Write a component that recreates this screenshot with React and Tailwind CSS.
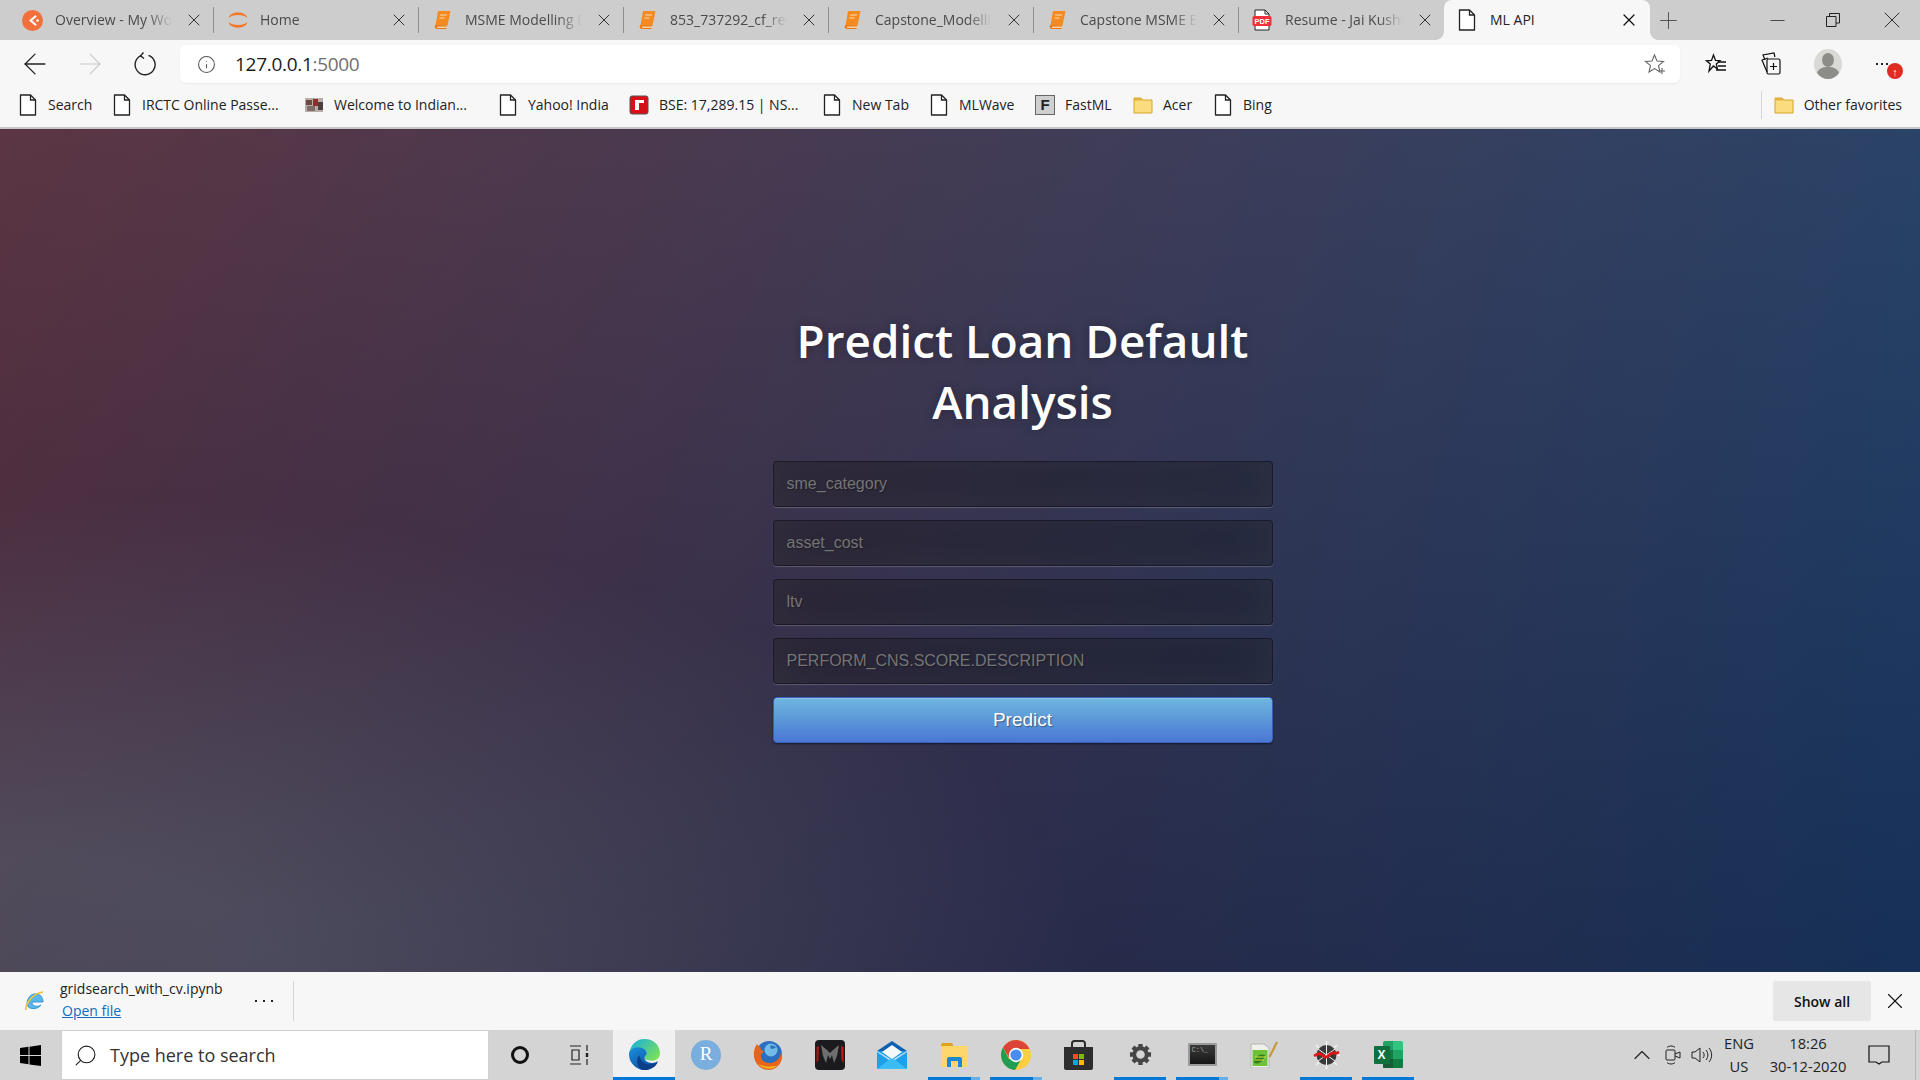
import React from "react";
import { ArrowLeft, ArrowRight, Info, X, Plus, Minus, ChevronUp, Search } from "lucide-react";

const DocIcon = ({ className = "" }) => (
  <svg width="18" height="22" viewBox="0 0 18 22" fill="none" className={className}>
    <path d="M1.500 1h10l5 5v15h-15z" fill="#fff" stroke="#222" strokeWidth="1.300" strokeLinejoin="round" />
    <path d="M11.500 1v5h5" stroke="#222" strokeWidth="1.300" fill="none" />
  </svg>
);

const BookIcon = () => (
  <svg width="20" height="20" viewBox="0 0 20 20">
    <path d="M6 1h12.500l-3 14.500H3.500z" fill="#f58a1f" />
    <path d="M3.500 15a2.400 2.400 0 0 0-.8 2c.2 1.300 1 2 2.300 2h9.500l.8-3.500z" fill="#e8770f" />
    <path d="M5 16.500h10.500l-.3 1.500H5z" fill="#fcd3a6" />
    <path d="M8 5h7M7.500 8h5" stroke="#ffdcb8" strokeWidth="1.200" />
  </svg>
);

const FolderIcon = () => (
  <svg width="20" height="18" viewBox="0 0 20 18">
    <path d="M1 2h7l2 2h9v13H1z" fill="#fbdc7e" stroke="#d3a62a" />
    <path d="M1 2h7l1.600 2.500H1z" fill="#e3b341" />
  </svg>
);

const PdfIcon = () => (
  <svg width="20" height="22" viewBox="0 0 20 22">
    <path d="M3 1h10l4 4v16H3z" fill="#fff" stroke="#222" />
    <path d="M13 1v4h4" fill="none" stroke="#222" />
    <rect x="0.500" y="7" width="19" height="10" rx="1.500" fill="#f0313c" />
    <text x="10" y="14.500" fontSize="7.500" fontWeight="700" fill="#fff" textAnchor="middle" fontFamily="Liberation Sans">PDF</text>
  </svg>
);

const tabs = [
  {
    title: "Overview - My Workspace",
    icon: (
      <svg width="21" height="21" viewBox="0 0 21 21">
        <circle cx="10.500" cy="10.500" r="10.500" fill="#f2703c" />
        <path d="M13.500 5 7 10.500l6.500 5.500 1.300-1.400-4.600-4.100 4.600-4.100z" fill="#fff" />
        <circle cx="15.500" cy="10.500" r="1.300" fill="#fff" />
      </svg>
    ),
  },
  {
    title: "Home",
    icon: (
      <svg width="22" height="22" viewBox="0 0 22 22" fill="#f37726">
        <path d="M1.500 9C3 1.500 19 1.500 20.500 9C17 5 5 5 1.500 9z" />
        <path d="M1.500 13C3 20.500 19 20.500 20.500 13C17 17 5 17 1.500 13z" />
      </svg>
    ),
  },
  { title: "MSME Modelling EDA and Report", icon: <BookIcon /> },
  { title: "853_737292_cf_recovery_data", icon: <BookIcon /> },
  { title: "Capstone_Modelling_Notebook", icon: <BookIcon /> },
  { title: "Capstone MSME EDA Notebook", icon: <BookIcon /> },
  { title: "Resume - Jai Kushwaha Data", icon: <PdfIcon />, last: true },
];

const bookmarks = [
  { label: "Search", width: "w-[94px]", icon: <DocIcon className="mr-[1px]" /> },
  { label: "IRCTC Online Passe...", width: "w-[191px]", icon: <DocIcon className="mr-[1px]" /> },
  {
    label: "Welcome to Indian...",
    width: "w-[195px]",
    icon: (
      <svg width="20" height="18" viewBox="0 0 20 18">
        <rect x="1" y="2" width="18" height="14" fill="#b9aea8" />
        <path d="M2 4h6v5H2z" fill="#6b4a45" />
        <path d="M9 3h5v7H9z" fill="#8d2f2a" />
        <path d="M14 6h5v8h-5z" fill="#4b4240" />
        <path d="M3 10h8v5H3z" fill="#7f6f6a" />
      </svg>
    ),
  },
  { label: "Yahoo! India", width: "w-[130px]", icon: <DocIcon className="mr-[1px]" /> },
  {
    label: "BSE: 17,289.15 | NS...",
    width: "w-[194px]",
    icon: (
      <svg width="20" height="20" viewBox="0 0 20 20">
        <rect x="1" y="1" width="18" height="18" rx="2" fill="#d80f16" stroke="#555" />
        <path d="M6 5h9v3h-5v7H6z" fill="#fff" />
      </svg>
    ),
  },
  { label: "New Tab", width: "w-[107px]", icon: <DocIcon className="mr-[1px]" /> },
  { label: "MLWave", width: "w-[105px]", icon: <DocIcon className="mr-[1px]" /> },
  {
    label: "FastML",
    width: "w-[98px]",
    icon: (
      <span className="flex h-[20px] w-[20px] items-center justify-center border border-[#666] bg-[#cfcfcf] font-['Liberation_Sans',sans-serif] text-[15px] leading-none font-bold text-[#222]">
        F
      </span>
    ),
  },
  { label: "Acer", width: "w-[81px]", icon: <FolderIcon /> },
  { label: "Bing", width: "w-[70px]", icon: <DocIcon className="mr-[1px]" /> },
];

const fields = ["sme_category", "asset_cost", "ltv", "PERFORM_CNS.SCORE.DESCRIPTION"];

const taskIcons = [
  {
    key: "edge",
    active: true,
    icon: (
      <svg width="31" height="31" viewBox="0 0 30 30">
        <defs>
          <linearGradient id="edgeTop" x1="0.100" y1="0.100" x2="1" y2="0.700">
            <stop offset="0" stopColor="#1bb3d6" />
            <stop offset="1" stopColor="#7be05c" />
          </linearGradient>
          <linearGradient id="edgeBody" x1="0" y1="0" x2="0.700" y2="1">
            <stop offset="0" stopColor="#1b8fde" />
            <stop offset="1" stopColor="#0b4f9e" />
          </linearGradient>
        </defs>
        <path d="M15 0C24 0 30 6 30 14c0 5-4 7-8 7s-7-1-7-3c0-1 1-1.500 1-3 0-3-3-5-7-5-4 0-8 2-9 5C1 6 7 0 15 0z" fill="url(#edgeTop)" />
        <path d="M0 15c0-4 4-7 9-7 5 0 8 3 8 6 0 2-2 2-2 4 0 4 5 6 9 5 2-.5 3-1 4-2-2 5-7 9-13 9C7 30 0 23 0 15z" fill="url(#edgeBody)" />
        <path d="M11 29c-4-4-4-10-1-13 1 6 6 10 14 8 2-.5 3-1 4-2-2 5-7 8-13 8-1.500 0-3-.4-4-1z" fill="#0c3f8a" />
      </svg>
    ),
  },
  {
    key: "r",
    icon: (
      <span className="flex h-[30px] w-[30px] items-center justify-center rounded-full bg-[#7aaede] font-['Liberation_Serif',serif] text-[19px] text-white">
        R
      </span>
    ),
  },
  {
    key: "firefox",
    icon: (
      <svg width="30" height="30" viewBox="0 0 30 30">
        <circle cx="16" cy="14" r="13" fill="#2a6fc0" />
        <circle cx="18" cy="10" r="6.500" fill="#72bde8" />
        <path d="M17 6c3-1 5 0 6 2-2 0-3 1-5 1z" fill="#2a6fc0" />
        <path d="M4 4C0 10-.5 18 4 24c5 7 15 8 21 2 4-4 5-9 3.500-14-1 5-5 11-12 11-6 0-9-4-8.500-8 .5-1.500 2-2.500 3.500-3.500C9 11 7 9 7.500 7 6 6.500 5 5.500 4 4z" fill="#e6651b" />
        <path d="M5 24c6 6 15 6 20 1-6 2.500-15 1.500-20-1z" fill="#f5b21f" />
      </svg>
    ),
  },
  {
    key: "predator",
    icon: (
      <svg width="30" height="30" viewBox="0 0 30 30">
        <rect width="30" height="30" rx="4" fill="#1b1b1d" />
        <path d="M1.500 7 4 6l-.5 14-2 3z" fill="#a91616" />
        <path d="M28.500 7 26 6l.5 14 2 3z" fill="#c31818" />
        <path d="M6 5l6 5 3 3 3-3 6-5-2 11-3 7-2-8-2 4-2-4-2 8-3-7z" fill="#6e6e72" />
      </svg>
    ),
  },
  {
    key: "mail",
    icon: (
      <svg width="30" height="28" viewBox="0 0 30 28">
        <path d="M15 0 30 10H0z" fill="#0a5fb0" />
        <path d="M0 10h30v18H0z" fill="#1ea0ea" />
        <path d="M5 11 15 4l10 7-10 7z" fill="#f5f8fb" />
        <path d="M0 10l15 9 15-9v1L15 21 0 11z" fill="#cfe4f3" />
        <path d="M0 28 13 18l2 1 2-1 13 10z" fill="#38bdf6" />
      </svg>
    ),
  },
  {
    key: "explorer",
    bar: "split",
    icon: (
      <svg width="27" height="24" viewBox="0 0 27 24">
        <path d="M0 2a2 2 0 0 1 2-2h8a2 2 0 0 1 2 2v2H0z" fill="#e0a21b" />
        <rect y="3" width="27" height="21" rx="1" fill="#fdd76c" />
        <path d="M6 24v-8a2 2 0 0 1 2-2h11a2 2 0 0 1 2 2v8h-4v-6h-7v6z" fill="#1d87d6" />
      </svg>
    ),
  },
  {
    key: "chrome",
    bar: "split",
    icon: (
      <svg width="30" height="30" viewBox="0 0 30 30">
        <circle cx="15" cy="15" r="15" fill="#fbcf3f" />
        <path d="M15 0C9.500 0 4.700 3 2 7.500L8.500 18.500 15 9h13.500C26 3.500 21 0 15 0z" fill="#db4437" />
        <path d="M2 7.500C-.7 12-.7 18 2 22.500 4.700 27 9 29.700 14 30l6-10.500-12-.5z" fill="#1f9e52" />
        <circle cx="15" cy="15" r="7.200" fill="#fff" />
        <circle cx="15" cy="15" r="5.600" fill="#4a8df0" />
      </svg>
    ),
  },
  {
    key: "store",
    icon: (
      <svg width="29" height="30" viewBox="0 0 29 30">
        <path d="M8 8V3.500A2.500 2.500 0 0 1 10.500 1h8A2.500 2.500 0 0 1 21 3.500V8" fill="none" stroke="#2c2c2c" strokeWidth="2" />
        <path d="M0 7h29v21a2 2 0 0 1-2 2H2a2 2 0 0 1-2-2z" fill="#2e2e2e" />
        <rect x="9" y="14" width="5" height="5" fill="#f25022" />
        <rect x="15" y="14" width="5" height="5" fill="#7fba00" />
        <rect x="9" y="20" width="5" height="5" fill="#00a4ef" />
        <rect x="15" y="20" width="5" height="5" fill="#ffb900" />
      </svg>
    ),
  },
  {
    key: "settings",
    bar: "full",
    icon: (
      <svg width="23" height="23" viewBox="0 0 24 24">
        <circle cx="12" cy="12" r="6.500" fill="none" stroke="#454545" strokeWidth="4" />
        <path d="M12 1v4M12 19v4M1 12h4M19 12h4M4.200 4.200 7 7M17 17l2.800 2.800M4.200 19.800 7 17M17 7l2.800-2.800" stroke="#454545" strokeWidth="4.500" />
      </svg>
    ),
  },
  {
    key: "cmd",
    bar: "split",
    icon: (
      <span className="flex h-[23px] w-[29px] flex-col rounded-[1px] border-[2px] border-[#9a9a9a] bg-[linear-gradient(to_bottom,#3a3a3a,#161616)]">
        <span className="pt-[2px] pl-[2px] font-['Liberation_Mono',monospace] text-[7px] leading-none text-[#aaa]">C:\_</span>
      </span>
    ),
  },
  {
    key: "notepad",
    icon: (
      <svg width="29" height="27" viewBox="0 0 29 27">
        <path d="M1 3h13l5 4v20H1z" fill="#eef0ea" stroke="#b5b5b5" />
        <rect x="2.500" y="9" width="15" height="16" fill="#6fc13a" />
        <path d="M4 22c1-7 6-10 11-8-1 4-4 10-11 8z" fill="#2f7d1e" />
        <path d="M5 16h11M5 19h9" stroke="#d7e63f" strokeWidth="1" />
        <path d="M27 1 19.500 16" stroke="#c49a3c" strokeWidth="2.200" />
      </svg>
    ),
  },
  {
    key: "spyder",
    bar: "full",
    icon: (
      <svg width="27" height="28" viewBox="0 0 27 28">
        <path d="M13.500 0v28M3 4l21 20M24 4 3 24M0 14h27" stroke="#f2f2f2" strokeWidth="1.500" />
        <circle cx="13.500" cy="14" r="10" fill="#3a3a3a" />
        <path d="M13.500 4v20M5 8l17 12M22 8 5 20" stroke="#f2f2f2" strokeWidth="1" />
        <path d="M1 15c4-3 6-3 8-1s4 3 6 1 4-4 6-3 3 0 5-1" fill="none" stroke="#e01616" strokeWidth="2.800" />
      </svg>
    ),
  },
  {
    key: "excel",
    bar: "full",
    icon: (
      <span className="flex h-[28px] w-[29px] items-center">
        <span className="z-10 flex h-[18px] w-[16px] items-center justify-center rounded-[1px] bg-[#10703f] font-['Liberation_Sans',sans-serif] text-[12px] font-bold text-white">
          X
        </span>
        <span className="-ml-[7px] grid h-[28px] w-[20px] grid-cols-2 grid-rows-3 overflow-hidden rounded-[2px]">
          <span className="bg-[#21a366]" />
          <span className="bg-[#33c481]" />
          <span className="bg-[#107c41]" />
          <span className="bg-[#21a366]" />
          <span className="bg-[#185c37]" />
          <span className="bg-[#107c41]" />
        </span>
      </span>
    ),
  },
];

const App = () => {
  return (
    <div className="flex h-screen w-[1920px] flex-col overflow-hidden bg-[#f7f7f7] font-['Open_Sans',sans-serif]">
      {/* tab strip */}
      <div className="flex h-[40px] shrink-0 items-center bg-[#cdcdcd] pl-[9px]">
        {tabs.map((tab, i) => (
          <div
            key={i}
            className={`flex h-[26px] w-[205px] items-center pr-[9px] pl-[13px] ${tab.last ? "" : "border-r border-[#8e8e8e]"}`}
          >
            <span className="flex w-[33px] shrink-0 items-center">{tab.icon}</span>
            <span className="-mt-[1px] min-w-0 flex-1 overflow-hidden text-[14px] whitespace-nowrap text-[#4a4a4a] [mask-image:linear-gradient(to_right,black_76%,transparent_96%)]">
              {tab.title}
            </span>
            <X size={20} strokeWidth={1.200} className="ml-[7px] shrink-0 text-[#333]" />
          </div>
        ))}
        <div className="relative flex h-[40px] w-[206px] items-center self-end rounded-t-[8px] bg-[#f7f7f7] pr-[11px] pl-[14px]">
          <span className="absolute bottom-0 left-[-8px] h-[8px] w-[8px] bg-[radial-gradient(circle_at_0_0,#cdcdcd_7.500px,#f7f7f7_8px)]" />
          <span className="absolute right-[-8px] bottom-0 h-[8px] w-[8px] bg-[radial-gradient(circle_at_100%_0,#cdcdcd_7.500px,#f7f7f7_8px)]" />
          <DocIcon />
          <span className="-mt-[1px] ml-[14px] flex-1 text-[14px] text-[#222]">ML API</span>
          <X size={20} strokeWidth={1.500} className="text-[#111]" />
        </div>
        <Plus size={27} strokeWidth={0.900} className="ml-[5px] text-[#555]" />
        <div className="ml-auto flex items-center text-[#222]">
          <Minus size={23} strokeWidth={0.800} className="mr-[37px]" />
          <svg width="14" height="14" viewBox="0 0 14 14" fill="none" stroke="#222" className="mr-[38px]">
            <path d="M.5 3.500h9.500v10H.5zM3.500 3.500V.5h10v9.500h-3.500" />
          </svg>
          <X size={28} strokeWidth={0.800} className="mr-[14px]" />
        </div>
      </div>

      {/* address row */}
      <div className="flex h-[46px] shrink-0 items-center bg-[#f7f7f7] pt-[2px] pl-[18px]">
        <ArrowLeft size={34} strokeWidth={0.900} className="text-[#222]" />
        <ArrowRight size={34} strokeWidth={0.800} className="ml-[21px] text-[#c9c9c9]" />
        <svg width="24" height="24" viewBox="0 0 24 24" fill="none" stroke="#222" strokeWidth="1.400" className="ml-[27px]">
          <path d="M14.500 3.300A10 10 0 1 1 7 3.600" />
          <path d="M9.500 0.500 6.500 3.800 10 6.500" />
        </svg>
        <div className="ml-[22px] flex h-[38px] w-[1500px] items-center rounded-[6px] bg-white pr-[14px] pl-[17px] shadow-[0_1px_2px_rgba(0,0,0,0.06)]">
          <Info size={19} strokeWidth={1.300} className="text-[#555]" />
          <span className="ml-[19px] flex-1 text-[19px] tracking-[-0.3px] text-[#1c1c1c]">
            127.0.0.1<span className="text-[#6f6f6f]">:5000</span>
          </span>
          <svg width="22" height="22" viewBox="0 0 22 22" fill="none" stroke="#666" strokeWidth="1.100">
            <path d="M10.500 2 13 8l6.500.5-5 4.200L16 19l-5.500-3.400L5 19l1.500-6.300-5-4.200L8 8z" />
            <path d="M18 15v6M15 18h6" />
          </svg>
        </div>
        <svg width="22" height="22" viewBox="0 0 22 22" fill="none" stroke="#111" strokeWidth="1.300" className="ml-[25px]">
          <path d="M8.500 2l2 5.500 4.500.3-3.700 3.300 1.200 5L8.500 13l-4.500 5 1.300-7L1.500 7.800 6.500 7.500z" />
          <path d="M13 9h8M13 13h8M11 17h10" />
        </svg>
        <svg width="22" height="24" viewBox="0 0 22 24" fill="none" stroke="#111" strokeWidth="1.200" className="ml-[33px]">
          <path d="M5 8 3 3l11-2 1 4" />
          <path d="M7 20 2 8l6-2" />
          <rect x="7" y="7" width="13" height="15" rx="1.500" />
          <path d="M13.500 11v7M10 14.500h7" />
        </svg>
        <svg width="28" height="30" viewBox="0 0 28 30" className="ml-[32px]">
          <ellipse cx="14" cy="15" rx="14" ry="15" fill="#d9d9d6" />
          <ellipse cx="14" cy="11" rx="6" ry="7" fill="#8c8c88" />
          <path d="M3 24c2-5 6-6 11-6s9 1 11 6c-3 4-7 6-11 6s-8-2-11-6z" fill="#8c8c88" />
        </svg>
        <div className="relative ml-[34px] flex items-center gap-[3px]">
          <span className="h-[2px] w-[2px] bg-[#222]" />
          <span className="h-[2px] w-[2px] bg-[#222]" />
          <span className="h-[2px] w-[2px] bg-[#222]" />
          <span className="absolute top-0 left-[11px] flex h-[16px] w-[16px] items-center justify-center rounded-full bg-[#e02b20] text-[11px] leading-none font-bold text-white">
            ↑
          </span>
        </div>
      </div>

      {/* favorites bar */}
      <div className="flex h-[43px] shrink-0 items-center border-b-2 border-[#c8c8c8] bg-[#f7f7f7] pb-[4px] pl-[19px]">
        {bookmarks.map((b) => (
          <div key={b.label} className={`${b.width} flex items-center gap-[10px]`}>
            {b.icon}
            <span className="text-[14px] whitespace-nowrap text-[#222]">{b.label}</span>
          </div>
        ))}
        <div className="ml-auto flex h-[28px] items-center border-l border-[#d5d5d5] pr-[18px] pl-[12px]">
          <FolderIcon />
          <span className="ml-[10px] text-[14px] text-[#222]">Other favorites</span>
        </div>
      </div>

      {/* page */}
      <div className="flex min-h-0 flex-1 justify-center bg-[radial-gradient(ellipse_farthest-corner_at_0%_100%,rgba(104,128,138,0.4)_10%,rgba(138,114,76,0)_40%),linear-gradient(to_bottom,rgba(57,173,219,0.25)_0%,rgba(42,60,87,0.4)_100%),linear-gradient(135deg,#670d10_0%,#092756_100%)] pt-[181px] pl-[125px]">
        <div className="w-[500px]">
          <h1 className="mb-[29px] text-center text-[45.800px] leading-[61px] font-semibold text-white [text-shadow:0_0_10px_rgba(0,0,0,0.3)]">
            Predict Loan Default Analysis
          </h1>
          <form className="flex flex-col gap-[13px] font-['Liberation_Sans',sans-serif]" onSubmit={(e) => e.preventDefault()}>
            {fields.map((name) => (
              <input
                key={name}
                type="text"
                placeholder={name}
                className="h-[46px] w-full rounded-[4px] border border-[rgba(0,0,0,0.3)] bg-[rgba(0,0,0,0.3)] px-[13px] text-[16px] text-white shadow-[inset_0_-5px_45px_rgba(100,100,100,0.2),0_1px_1px_rgba(255,255,255,0.2)] outline-none placeholder:text-[#757575] [text-shadow:1px_1px_1px_rgba(0,0,0,0.3)]"
              />
            ))}
            <button
              type="submit"
              className="h-[46px] w-full rounded-[4px] border border-[#3762bc] bg-[linear-gradient(to_bottom,#6eb6de,#4a77d4)] text-[19px] text-white shadow-[inset_0_1px_0_rgba(255,255,255,0.2),0_1px_2px_rgba(0,0,0,0.5)] [text-shadow:1px_1px_1px_rgba(0,0,0,0.4)]"
            >
              Predict
            </button>
          </form>
        </div>
      </div>

      {/* download shelf */}
      <div className="flex h-[58px] shrink-0 items-center bg-[#f7f7f7] pr-[12px] pl-[25px]">
        <svg width="20" height="22" viewBox="0 0 20 22" fill="none">
          <path d="M2 14C2 7 7 3 12 4c5 1 6 5 6 8H7c0 5 6 5 9 3-3 5-14 5-14-1z" fill="#5ab5ea" stroke="#1d8fd6" strokeWidth="0.800" />
          <path d="M1 20C0 14 8 3 18 2" stroke="#f2c230" strokeWidth="1.600" />
        </svg>
        <div className="ml-[15px] flex w-[190px] -translate-y-[1px] flex-col">
          <span className="text-[14px] leading-[22px] text-[#222]">gridsearch_with_cv.ipynb</span>
          <a className="ml-[2px] w-fit text-[14px] leading-[22px] text-[#0f6cbd] underline">Open file</a>
        </div>
        <div className="ml-[5px] flex gap-[6px]">
          <span className="h-[2px] w-[2px] bg-[#222]" />
          <span className="h-[2px] w-[2px] bg-[#222]" />
          <span className="h-[2px] w-[2px] bg-[#222]" />
        </div>
        <div className="ml-[20px] h-[40px] w-px bg-[#d5d5d5]" />
        <button className="ml-auto h-[40px] w-[98px] rounded-[2px] bg-[#e6e6e6] text-[14px] font-semibold text-[#111]">
          Show all
        </button>
        <X size={26} strokeWidth={1} className="ml-[11px] text-[#111]" />
      </div>

      {/* taskbar */}
      <div className="flex h-[50px] shrink-0 items-stretch bg-[#d4d4d4]">
        <div className="flex w-[61px] items-center justify-center">
          <svg width="21" height="21" viewBox="0 0 21 21" fill="#000">
            <path d="M0 3l8.500-1.200V10H0zM9.500 1.700 21 0v10H9.500zM0 11h8.500v8.300L0 18zM9.500 11H21v10L9.500 19.400z" />
          </svg>
        </div>
        <div className="flex w-[428px] items-center border border-[#d0d0d0] bg-white pl-[11px]">
          <Search size={25} strokeWidth={1.100} className="-scale-x-100 text-[#222]" />
          <span className="ml-[12px] text-[18px] text-[#333]">Type here to search</span>
        </div>
        <div className="flex w-[62px] items-center justify-center">
          <span className="h-[18px] w-[18px] rounded-full border-[3px] border-[#111]" />
        </div>
        <div className="flex w-[56px] items-center justify-center">
          <svg width="20" height="20" viewBox="0 0 20 20" fill="none" stroke="#222" strokeWidth="1.200">
            <path d="M1 1h11M1 19h11M3 5h7v10H3zM18 0v6M18 14v6" />
            <path d="M18 8v4" strokeWidth="2.500" />
          </svg>
        </div>
        <div className="ml-[6px] flex">
          {taskIcons.map((t) => (
            <div
              key={t.key}
              className={`relative flex w-[62px] items-center justify-center pb-[1px] ${t.active ? "bg-[#f0f0f0]" : ""}`}
            >
              {t.icon}
              {t.bar === "full" && <span className="absolute right-[5px] bottom-0 left-[5px] h-[3px] bg-[#0078d7]" />}
              {t.active && <span className="absolute right-0 bottom-0 left-0 h-[3px] bg-[#0078d7]" />}
              {t.bar === "split" && (
                <span className="absolute right-[5px] bottom-0 left-[5px] flex h-[3px]">
                  <span className="flex-1 bg-[#0078d7]" />
                  <span className="w-[9px] bg-[#66b0ea]" />
                </span>
              )}
            </div>
          ))}
        </div>
        <div className="mr-[4px] ml-auto flex items-center border-r border-[#b5b5b5] pr-[25px]">
          <ChevronUp size={28} strokeWidth={1} className="text-[#222]" />
          <svg width="16" height="20" viewBox="0 0 16 20" fill="none" stroke="#222" strokeWidth="1" className="ml-[9px]">
            <rect x="1" y="5" width="9" height="10" rx="1" />
            <path d="M10 9l5-2v6l-5-2M2 2.500c2-2 6-2 8 0M2 17.500c2 2 6 2 8 0" />
          </svg>
          <svg width="22" height="18" viewBox="0 0 22 18" fill="none" stroke="#222" strokeWidth="1" className="ml-[10px]">
            <path d="M1 6h3l5-4v14l-5-4H1zM12 6c1.500 2 1.500 4 0 6M15 4c2.500 3 2.500 7 0 10M18 2c3.500 4 3.500 10 0 14" />
          </svg>
          <div className="ml-[6px] flex w-[40px] flex-col items-center text-[14.700px] leading-[23px] text-[#222]">
            <span>ENG</span>
            <span>US</span>
          </div>
          <div className="ml-[7px] flex w-[84px] flex-col items-center text-[14.700px] leading-[23px] text-[#222]">
            <span>18:26</span>
            <span>30-12-2020</span>
          </div>
          <svg width="22" height="22" viewBox="0 0 22 22" fill="none" stroke="#111" strokeWidth="1.200" className="ml-[18px]">
            <path d="M1 2h20v16h-7l-3 2-3-2H1z" />
          </svg>
        </div>
      </div>
    </div>
  );
};

export default App;
